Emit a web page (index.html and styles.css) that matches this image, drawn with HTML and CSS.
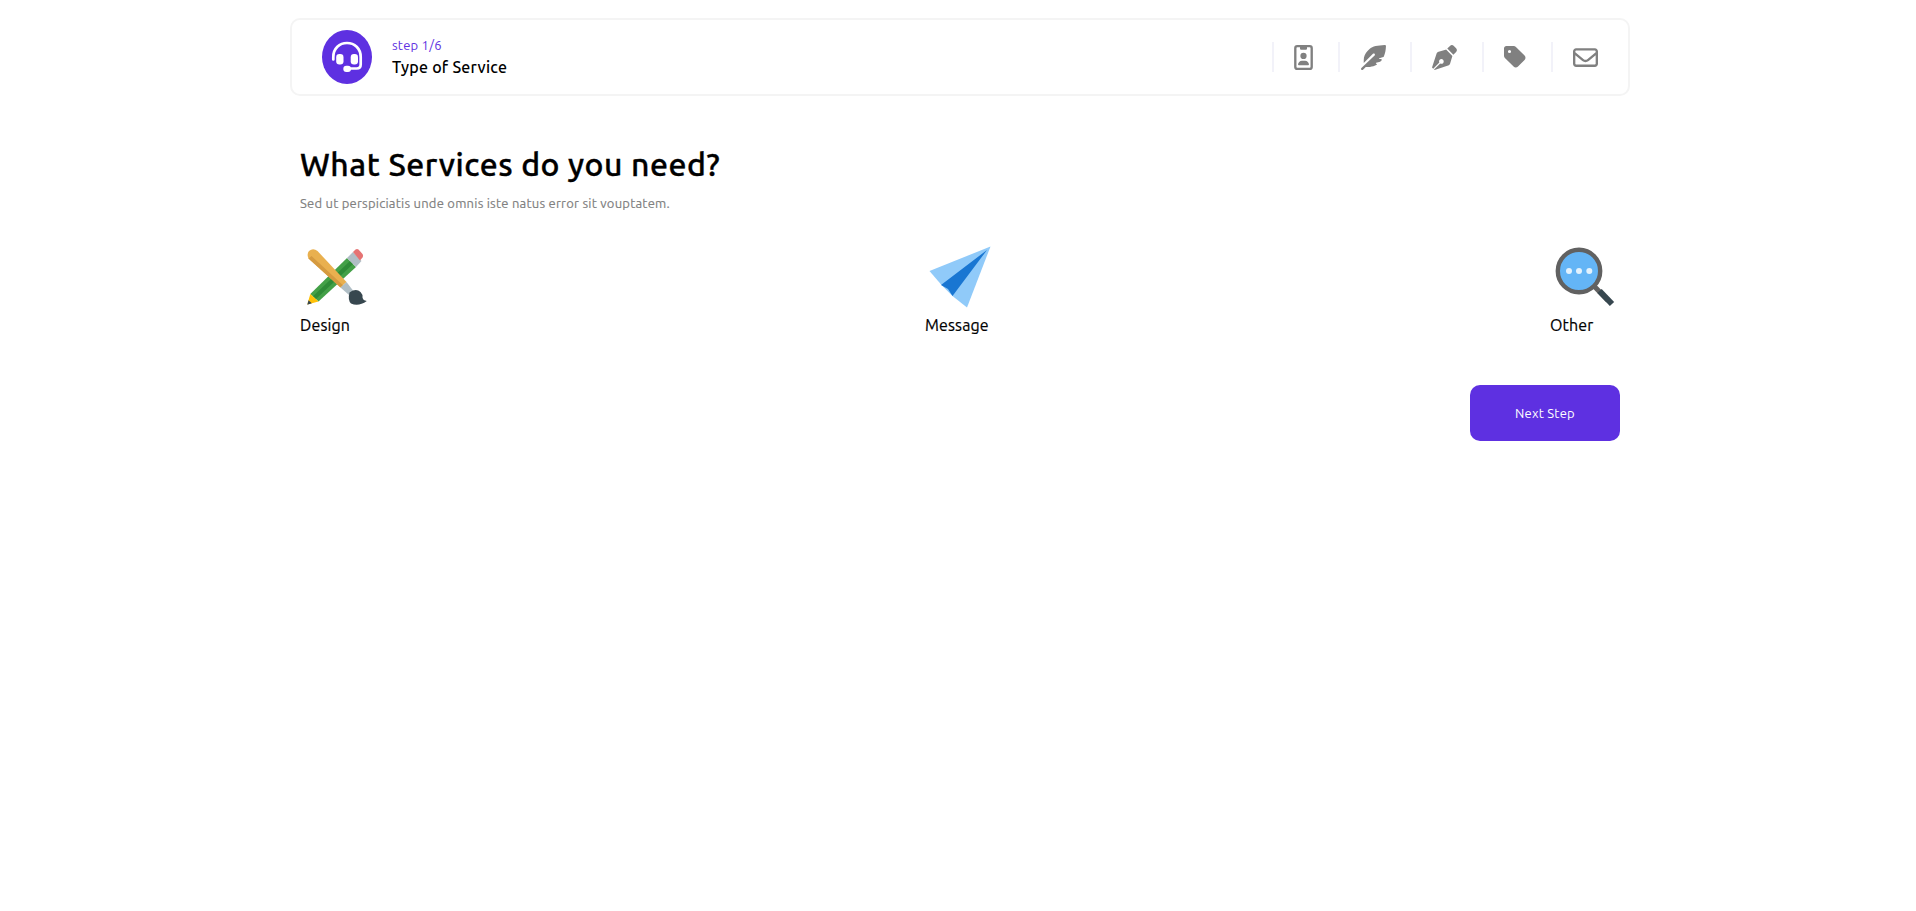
FILE: index.html
```html
<!DOCTYPE html>
<html lang="en">
<head>
<meta charset="utf-8">
<title>Type of Service</title>
<link rel="stylesheet" href="styles.css">
</head>
<body>
<main class="page">
  <header class="stepper">
    <div class="badge">
      <svg width="50" height="54" viewBox="0 0 50 54" fill="none">
        <path d="M11.300 29.500V27C11.300 18.500 17.500 13 25 13S38.700 18.500 38.700 27v7.500q0 4-4 4H27" stroke="#fff" stroke-width="2.700" stroke-linecap="round" stroke-linejoin="round"/>
        <rect x="14.200" y="24" width="7.300" height="10.500" rx="3.200" fill="#fff"/>
        <rect x="28.700" y="24" width="7.300" height="10.500" rx="3.200" fill="#fff"/>
        <rect x="21.300" y="35.800" width="7.700" height="6.200" rx="3" fill="#fff"/>
      </svg>
    </div>
    <div class="current">
      <span class="count">step 1/6</span>
      <span class="title">Type of Service</span>
    </div>
    <ul class="steps">
      <li class="step id"><svg width="19" height="25" viewBox="0 0 384 512"><path fill-rule="evenodd" d="M64 0h256a64 64 0 0 1 64 64v384a64 64 0 0 1-64 64H64a64 64 0 0 1-64-64V64A64 64 0 0 1 64 0zM48 64v384q0 16 16 16h256q16 0 16-16V64q0-16-16-16h-56v24q0 24-24 24h-96q-24 0-24-24V48H64q-16 0-16 16z"/><circle cx="192" cy="224" r="64"/><path d="M80 400c0-44 36-80 80-80h64c44 0 80 36 80 80q0 16-16 16H96q-16 0-16-16z"/></svg></li>
      <li class="step feather"><svg width="25" height="25" viewBox="0 0 512 512"><path d="M278.500 215.600 41 453 34 505c-9 9-25 9-34 0s-9-25 0-34l244.500-289.400L278.500 215.600z" opacity="0"/><path d="M278.500 215.600 8 471c-10 10-10 25-1 34s25 9 34 0l57-57h84c49.700 0 97.900-14.400 139-41 11.100-7.200 5.500-23-7.800-23-5.100 0-9.200-4.100-9.200-9.200 0-4.100 2.700-7.600 6.500-8.800l81-24.300c2.500-.8 4.800-2.100 6.700-4l22.400-22.400c10.100-10.100 2.900-27.300-11.300-27.300h-32.200c-5.100 0-9.200-4.100-9.200-9.200 0-4.100 2.700-7.600 6.500-8.800l84-25c4-1.200 7.400-3.900 9.300-7.700C492 175 508 110 511 24 512 8 504 0 488 1 340 10 240 25 175 83l-41.400 41.200C83.900 174 56 241.400 56 311.700v58.300l188.500-188.400c9.400-9.400 24.600-9.400 33.900 0s9.400 24.600 0 34z"/></svg></li>
      <li class="step pen"><svg width="25" height="25" viewBox="0 0 512 512"><path d="M368.400 18.300 312.700 74.100l125.200 125.200 55.700-55.700c21.900-21.900 21.900-57.300 0-79.200l-46.100-46.100c-21.900-21.900-57.300-21.900-79.200 0zM288 94.600l-9.200 2.800-144.100 43.200c-19.900 6-35.700 21.200-42.300 41L0 460.300 25.100 485.400l125.300-125.300c-4.100-7.200-6.400-15.400-6.400-24.100 0-26.500 21.500-48 48-48s48 21.500 48 48-21.500 48-48 48c-8.700 0-16.900-2.300-24-6.400L42.700 503 52 512l278.400-92.500c19.700-6.600 35-22.400 41-42.300l43.200-144.100 2.800-9.200z"/></svg></li>
      <li class="step tag"><svg width="22" height="22" viewBox="0 32 448 448"><path fill-rule="evenodd" d="M0 80v149.500c0 17 6.700 33.300 18.700 45.300l176 176c25 25 65.500 25 90.500 0l133.500-133.500c25-25 25-65.500 0-90.500l-176-176c-12-12-28.300-18.700-45.300-18.700H48C21.500 32 0 53.500 0 80zm144 64a32 32 0 1 1-64 0 32 32 0 0 1 64 0z"/></svg></li>
      <li class="step mail"><svg width="25" height="19" viewBox="0 64 512 384"><path fill-rule="evenodd" d="M64 112c-8.800 0-16 7.200-16 16v22.100l172.500 141.600c20.700 17 50.400 17 71.100 0L464 150.100V128c0-8.800-7.200-16-16-16zM48 212.200V384c0 8.800 7.200 16 16 16h384c8.800 0 16-7.200 16-16V212.200L322 328.800c-38.400 31.500-93.700 31.500-132 0zM0 128c0-35.300 28.700-64 64-64h384c35.300 0 64 28.700 64 64v256c0 35.300-28.700 64-64 64H64c-35.300 0-64-28.700-64-64z"/></svg></li>
    </ul>
  </header>

  <section class="content">
    <h1 class="heading">What Services do you need?</h1>
    <p class="lead">Sed ut perspiciatis unde omnis iste natus error sit vouptatem.</p>
    <div class="services">
      <div class="service">
        <svg class="art" viewBox="0 0 70 70">
          <path fill="#43a047" d="M47 18 56 27 18.500 61.500 10.300 54z"/>
          <path fill="#2e8b37" d="m50 21 3 3-37 35-3-2.700z"/>
          <path fill="#b0bec5" d="m47 18 6-6 8.500 9-5.500 6z"/>
          <path fill="#e57373" d="m53 12 2.500-2.500q1.500-1 3 0l4 4.500q1 1.500 0 3.500l-2.500 3z"/>
          <path fill="#ffc107" d="m10.300 54 8.200 7.500-11.200 3z"/>
          <path fill="#37474f" d="m8.500 60.200 3.300 3-4.500 1.500z"/>
          <path fill="#e9b04f" d="M9 11q4-3.500 8.500 0L46.500 42 40.500 47.500 8.500 18.500Q6.500 14 9 11z"/>
          <path fill="#d59a40" d="M8.500 18.500 11.500 16 43 45.200l-2.500 2.300z"/>
          <path fill="#b0bec5" d="m46.500 42 6.500 8.500-4 4.500-8.500-7.500z"/>
          <path fill="#37474f" d="M49.500 52.500q6.500-4.500 11-.5 2.500 2.500 2 5.500.5 3 4.300 3.500-8.300 6-15.800 2.500-3.500-3.500-1.500-11z"/>
        </svg>
        <span class="name">Design</span>
      </div>
      <div class="service">
        <svg class="art" viewBox="0 0 70 70">
          <path fill="#90caf9" d="M65.500 6.500 4.500 31l12 14L27.500 56 42 67.500z"/>
          <path fill="#1976d2" d="M62 10 16 45l7 4 4.500 7z"/>
        </svg>
        <span class="name">Message</span>
      </div>
      <div class="service">
        <svg class="art" viewBox="0 0 70 70">
          <path d="m43 45 15 15.500" stroke="#616161" stroke-width="5"/>
          <path d="m49.500 51 12.500 13" stroke="#37474f" stroke-width="6"/>
          <circle cx="29" cy="31" r="21.200" fill="#64b5f6" stroke="#616161" stroke-width="4.400"/>
          <g fill="#e3f2fd"><circle cx="19" cy="31" r="3"/><circle cx="29" cy="31" r="3"/><circle cx="39.300" cy="31" r="3"/></g>
        </svg>
        <span class="name">Other</span>
      </div>
    </div>
    <div class="actions"><button class="next" type="button">Next Step</button></div>
  </section>
</main>
</body>
</html>
```
FILE: styles.css
```css
* { box-sizing: border-box; }
body {
  margin: 0;
  background: #fff;
  color: #000;
  font-family: Ubuntu, "Noto Sans", sans-serif;
  font-size: 16px;
}
.page { width: 1340px; margin: 18px 0 0 290px; }
.stepper {
  display: flex;
  align-items: center;
  height: 78px;
  padding: 0 30px;
  border: 2px solid #f4f4f4;
  border-radius: 10px;
}
.badge { width: 50px; height: 54px; border-radius: 50%; background: #5e30e1; }
.badge svg { display: block; }
.current { display: flex; flex-direction: column; margin-left: 20px; white-space: nowrap; }
.count { color: #5e30e1; font-size: 13px; line-height: 20px; letter-spacing: .22px; }
.title { font-size: 16px; font-weight: 500; line-height: 24px; letter-spacing: .26px; }
.steps { display: flex; margin: 0 0 0 auto; padding: 0; list-style: none; }
.step {
  display: flex;
  align-items: center;
  height: 30px;
  border-left: 2px solid #f2f2f9;
  padding-left: 20px;
  fill: gray;
}
.step svg { display: block; }
.id { width: 66px; }
.feather { width: 72px; padding-left: 20.5px; }
.pen { width: 72px; }
.tag { width: 69px; }
.mail { width: 47px; }
.content { padding: 46px 10px 0; }
.heading {
  margin: 0;
  font-size: 32px;
  font-weight: 500;
  line-height: 44px;
  letter-spacing: .53px;
  white-space: nowrap;
  -webkit-text-stroke: .35px #000;
}
.lead {
  margin: 7px 0 0;
  color: gray;
  font-size: 13px;
  line-height: 20px;
  letter-spacing: .23px;
  white-space: nowrap;
  -webkit-text-stroke: .15px gray;
}
.services { display: flex; justify-content: space-between; margin-top: 27px; }
.service { width: 70px; }
.art { display: block; width: 70px; height: 70px; }
.name {
  display: block;
  margin-top: 3px;
  line-height: 24px;
  letter-spacing: .13px;
  white-space: nowrap;
  -webkit-text-stroke: .2px #000;
}
.actions { display: flex; justify-content: flex-end; margin-top: 48px; }
.next {
  width: 150px;
  height: 56px;
  padding: 0;
  border: 0;
  border-radius: 10px;
  background: #5e30e1;
  color: #fff;
  font: inherit;
  font-size: 13px;
  letter-spacing: .22px;
}
```
